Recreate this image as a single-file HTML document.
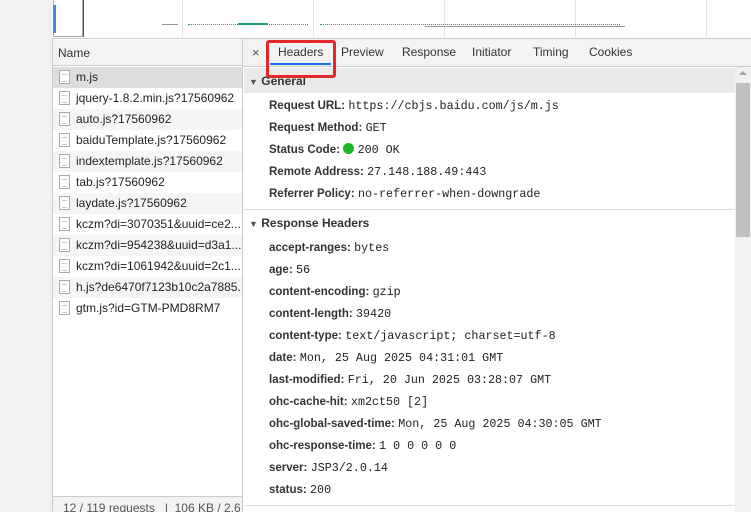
<!DOCTYPE html>
<html><head><style>
*{margin:0;padding:0;box-sizing:border-box}
body{width:751px;height:512px;overflow:hidden;background:#fff;font-family:"Segoe UI","Liberation Sans",sans-serif;font-size:12px;color:#222;position:relative}
.abs{position:absolute}
.mono{font-family:"Liberation Mono",monospace;font-size:11.7px}
.row{position:absolute;left:53px;width:189px;height:21px;line-height:21px;padding-left:23px;white-space:nowrap;overflow:hidden}
.row i{position:absolute;left:6px;top:3px;width:11px;height:14px;border:1px solid #aaa;background:#fff}
.row i:after{content:"";position:absolute;left:2px;top:3px;width:5px;height:6px;border-top:1px solid #ccc;border-bottom:1px solid #ccc}
.kv{position:absolute;left:269px;white-space:nowrap;line-height:22px}
.kv b{font-weight:bold;color:#333;font-size:11.5px}
.tab{position:absolute;top:45px;color:#333}
</style></head><body>
<div class="abs" style="left:0;top:0;width:52px;height:512px;background:#f1f1f1"></div>
<div class="abs" style="left:52px;top:0;width:699px;height:39px;background:#fff;border-bottom:1px solid #ccc"></div>
<div class="abs" style="left:53px;top:0;width:30px;height:37px;border:1px solid #aaa;border-top:none;background:#fff"></div>
<div class="abs" style="left:53px;top:5px;width:3px;height:28px;background:#3a8fd8"></div>
<div class="abs" style="left:83px;top:0;width:1px;height:37px;background:#b3263a"></div>
<div class="abs" style="left:182px;top:0;width:1px;height:37px;background:#e6e6e6"></div>
<div class="abs" style="left:313px;top:0;width:1px;height:37px;background:#e6e6e6"></div>
<div class="abs" style="left:444px;top:0;width:1px;height:37px;background:#e6e6e6"></div>
<div class="abs" style="left:575px;top:0;width:1px;height:37px;background:#e6e6e6"></div>
<div class="abs" style="left:706px;top:0;width:1px;height:37px;background:#e6e6e6"></div>
<div class="abs" style="left:162px;top:24px;width:16px;height:1px;background:#999"></div>
<div class="abs" style="left:188px;top:24px;width:120px;height:1px;border-top:1px dotted #1aa36a"></div>
<div class="abs" style="left:238px;top:23px;width:30px;height:2px;background:#1aa36a"></div>
<div class="abs" style="left:320px;top:24px;width:300px;height:1px;border-top:1px dotted #1aa36a"></div>
<div class="abs" style="left:425px;top:26px;width:200px;height:1px;background:#999"></div>
<div class="abs" style="left:52px;top:39px;width:191px;height:473px;border-left:1px solid #ccc;border-right:1px solid #ccc"></div>
<div class="abs" style="left:53px;top:40px;width:189px;height:26px;background:#f3f3f3;border-bottom:1px solid #ccc;line-height:26px;padding-left:5px;color:#333">Name</div>
<div class="row" style="top:67px;background:#ddd"><i></i>m.js</div>
<div class="row" style="top:88px"><i></i>jquery-1.8.2.min.js?17560962</div>
<div class="row" style="top:109px;background:#f5f5f5"><i></i>auto.js?17560962</div>
<div class="row" style="top:130px"><i></i>baiduTemplate.js?17560962</div>
<div class="row" style="top:151px;background:#f5f5f5"><i></i>indextemplate.js?17560962</div>
<div class="row" style="top:172px"><i></i>tab.js?17560962</div>
<div class="row" style="top:193px;background:#f5f5f5"><i></i>laydate.js?17560962</div>
<div class="row" style="top:214px"><i></i>kczm?di=3070351&amp;uuid=ce2...</div>
<div class="row" style="top:235px;background:#f5f5f5"><i></i>kczm?di=954238&amp;uuid=d3a1...</div>
<div class="row" style="top:256px"><i></i>kczm?di=1061942&amp;uuid=2c1...</div>
<div class="row" style="top:277px;background:#f5f5f5"><i></i>h.js?de6470f7123b10c2a7885...</div>
<div class="row" style="top:298px"><i></i>gtm.js?id=GTM-PMD8RM7</div>
<div class="abs" style="left:53px;top:496px;width:189px;height:16px;background:#f3f3f3;border-top:1px solid #ccc;color:#555;padding-left:10px;line-height:22px;white-space:nowrap;overflow:hidden">12 / 119 requests &nbsp;&nbsp;|&nbsp; 106 KB / 2.6 M</div>
<div class="abs" style="left:243px;top:39px;width:508px;height:28px;background:#f3f3f3;border-bottom:1px solid #ccc"></div>
<div class="tab" style="left:252px;font-size:13px;color:#555">×</div>
<div class="tab" style="left:278px">Headers</div>
<div class="abs" style="left:270px;top:63px;width:61px;height:2px;background:#1a73e8"></div>
<div class="tab" style="left:341px">Preview</div>
<div class="tab" style="left:402px">Response</div>
<div class="tab" style="left:472px">Initiator</div>
<div class="tab" style="left:533px">Timing</div>
<div class="tab" style="left:589px">Cookies</div>
<div class="abs" style="left:244px;top:68px;width:491px;height:25px;background:#eaeaea"></div>
<div class="abs" style="left:249px;top:74px;font-weight:bold;color:#333"><span style="font-size:9px;color:#555">▼</span> General</div>
<div class="kv" style="top:94px"><b>Request URL:</b> <span class="mono">https://cbjs.baidu.com/js/m.js</span></div>
<div class="kv" style="top:116px"><b>Request Method:</b> <span class="mono">GET</span></div>
<div class="kv" style="top:138px"><b>Status Code:</b> <span style="display:inline-block;width:11px;height:11px;border-radius:50%;background:#1cb526;vertical-align:-1px"></span> <span class="mono">200 OK</span></div>
<div class="kv" style="top:160px"><b>Remote Address:</b> <span class="mono">27.148.188.49:443</span></div>
<div class="kv" style="top:182px"><b>Referrer Policy:</b> <span class="mono">no-referrer-when-downgrade</span></div>
<div class="abs" style="left:244px;top:209px;width:491px;height:1px;background:#ddd"></div>
<div class="abs" style="left:249px;top:216px;font-weight:bold;color:#333"><span style="font-size:9px;color:#555">▼</span> Response Headers</div>
<div class="kv" style="top:236px"><b>accept-ranges:</b> <span class="mono">bytes</span></div>
<div class="kv" style="top:258px"><b>age:</b> <span class="mono">56</span></div>
<div class="kv" style="top:280px"><b>content-encoding:</b> <span class="mono">gzip</span></div>
<div class="kv" style="top:302px"><b>content-length:</b> <span class="mono">39420</span></div>
<div class="kv" style="top:324px"><b>content-type:</b> <span class="mono">text/javascript; charset=utf-8</span></div>
<div class="kv" style="top:346px"><b>date:</b> <span class="mono">Mon, 25 Aug 2025 04:31:01 GMT</span></div>
<div class="kv" style="top:368px"><b>last-modified:</b> <span class="mono">Fri, 20 Jun 2025 03:28:07 GMT</span></div>
<div class="kv" style="top:390px"><b>ohc-cache-hit:</b> <span class="mono">xm2ct50 [2]</span></div>
<div class="kv" style="top:412px"><b>ohc-global-saved-time:</b> <span class="mono">Mon, 25 Aug 2025 04:30:05 GMT</span></div>
<div class="kv" style="top:434px"><b>ohc-response-time:</b> <span class="mono">1 0 0 0 0 0</span></div>
<div class="kv" style="top:456px"><b>server:</b> <span class="mono">JSP3/2.0.14</span></div>
<div class="kv" style="top:478px"><b>status:</b> <span class="mono">200</span></div>
<div class="abs" style="left:244px;top:505px;width:491px;height:1px;background:#ddd"></div>
<div class="abs" style="left:735px;top:67px;width:16px;height:445px;background:#f1f1f1"></div>
<div class="abs" style="left:739px;top:71px;width:0;height:0;border-left:4px solid transparent;border-right:4px solid transparent;border-bottom:4px solid #a3a3a3"></div>
<div class="abs" style="left:736px;top:83px;width:14px;height:154px;background:#c1c1c1"></div>
<div class="abs" style="left:266px;top:40px;width:70px;height:38px;border:3px solid #e3282c;border-radius:3px;z-index:10"></div>
</body></html>
